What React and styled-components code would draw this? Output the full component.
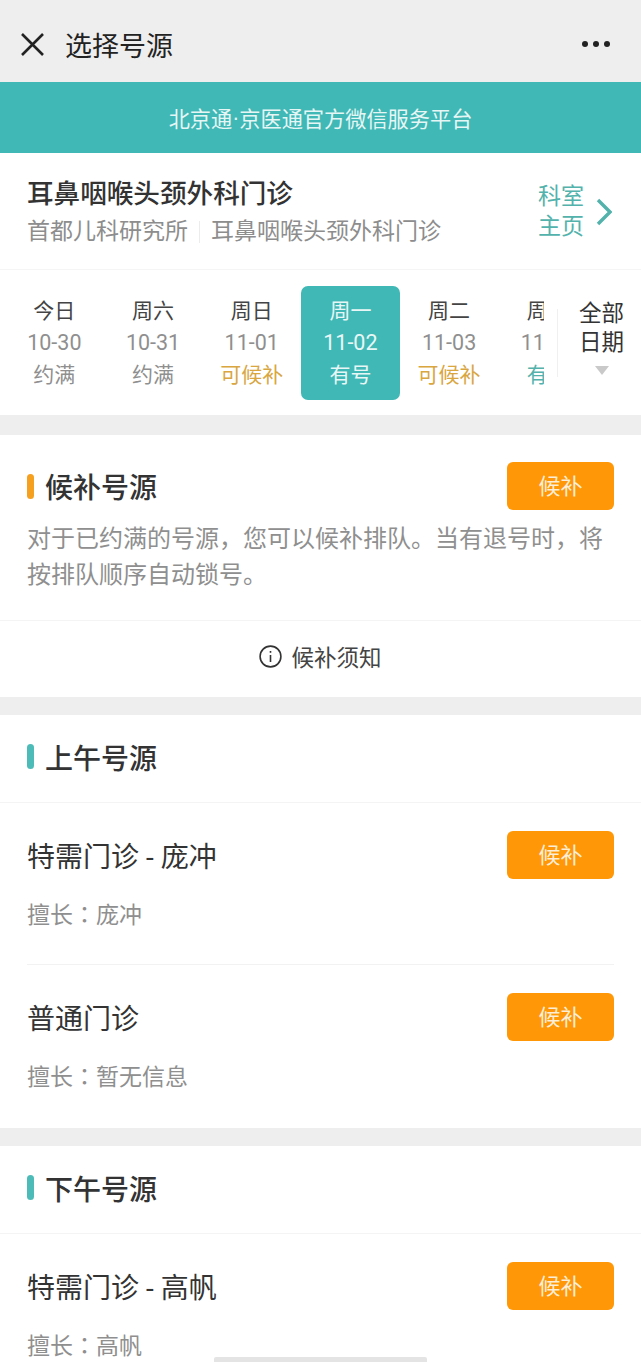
import styled, { createGlobalStyle } from 'styled-components';

const GlobalStyle = createGlobalStyle`
    html, body {
        margin: 0;
        padding: 0;
        background: #eeeeee;
    }
    * {
        box-sizing: border-box;
    }
`;

const Page = styled.div`
    position: relative;
    width: 641px;
    height: 1362px;
    overflow: hidden;
    background: #eeeeee;
    font-family: Roboto, "Noto Sans CJK SC", sans-serif;
    color: #333;
`;

const NavBar = styled.header`
    display: flex;
    align-items: center;
    height: 82px;
    padding: 6px 30px 0 20px;
    background: #eeeeee;
    h1 {
        flex: 1;
        margin: 0 0 0 20px;
        font-size: 27px;
        font-weight: 400;
        color: #222;
    }
`;

const Banner = styled.div`
    display: flex;
    align-items: center;
    justify-content: center;
    height: 71px;
    background: #40b8b5;
    color: #e6f6f5;
    font-size: 21.2px;
`;

const Dot = styled.span`
    font-family: "Liberation Sans", sans-serif;
`;

const DeptHeader = styled.section`
    display: flex;
    align-items: center;
    justify-content: space-between;
    height: 117px;
    padding: 2px 29px 0 27px;
    background: #fff;
    border-bottom: 1px solid #f5f5f5;
`;

const DeptTitle = styled.h2`
    margin: 0;
    font-size: 26.6px;
    line-height: 38px;
    font-weight: 500;
    color: #333;
`;

const DeptSub = styled.div`
    display: flex;
    align-items: center;
    margin-top: 2px;
    font-size: 23px;
    line-height: 34px;
    color: #8d8d8d;
    i {
        width: 1px;
        height: 22px;
        margin: 0 11px;
        background: #ececec;
    }
`;

const HomeLink = styled.div`
    display: flex;
    align-items: center;
    gap: 12px;
    color: #53b3ac;
    font-size: 23px;
    line-height: 30px;
    width: 74px;
    span {
        width: 46px;
        flex-shrink: 0;
    }
    svg {
        flex-shrink: 0;
    }
`;

const DateBar = styled.section`
    display: flex;
    align-items: center;
    height: 145px;
    padding-left: 5px;
    background: #fff;
`;

const DateScroll = styled.div`
    display: flex;
    width: 539px;
    overflow: hidden;
`;

const DateCell = styled.div`
    flex: 0 0 98.7px;
    height: 114px;
    padding-top: 9px;
    display: flex;
    flex-direction: column;
    align-items: center;
    border-radius: 7px;
    background: ${(p) => (p.$active ? '#40b8b5' : 'transparent')};
    color: ${(p) => (p.$active ? '#e8f7f6' : '#444')};
    font-size: 21px;
    line-height: 32px;
`;

const DateDay = styled.div`
    font-size: 21.5px;
    color: ${(p) => (p.$active ? '#e8f7f6' : '#8f8f8f')};
`;

const DateState = styled.div`
    color: ${(p) => p.$color};
`;

const AllDates = styled.div`
    display: flex;
    flex-direction: column;
    align-items: center;
    flex-shrink: 0;
    margin-left: 13px;
    padding-left: 21px;
    height: 68px;
    border-left: 1px solid #f0f0f0;
    font-size: 22.5px;
    line-height: 29px;
    color: #333;
    div {
        margin-top: -10px;
        width: 45px;
    }
    svg {
        flex-shrink: 0;
        margin-top: 9px;
    }
`;

const Card = styled.section`
    margin-top: ${(p) => p.$gap}px;
    background: #fff;
`;

const SectionHead = styled.div`
    display: flex;
    align-items: center;
    justify-content: space-between;
    height: ${(p) => p.$height}px;
    padding: 0 27px;
    ${(p) => (p.$line ? 'padding-bottom: 4px; border-bottom: 1px solid #f4f4f4;' : 'padding-top: 15px;')}
`;

const SectionTitle = styled.h3`
    display: flex;
    align-items: center;
    gap: 11px;
    margin: 0;
    font-size: 28px;
    font-weight: 500;
    color: #333;
    &::before {
        content: '';
        width: 7px;
        height: 25px;
        border-radius: 4px;
        background: ${(p) => p.$color};
    }
`;

const ActionButton = styled.button`
    width: 107px;
    height: 48px;
    border: 0;
    padding: 0 0 4px;
    border-radius: 6px;
    background: #ff9706;
    color: #fdeed8;
    font: inherit;
    font-size: 22px;
    flex-shrink: 0;
`;

const Notice = styled.p`
    margin: 0;
    padding: 0 27px 27px;
    font-size: 24px;
    line-height: 35.5px;
    color: #8f8f8f;
`;

const NoticeLink = styled.div`
    display: flex;
    align-items: center;
    justify-content: center;
    gap: 9px;
    height: 77px;
    padding-bottom: 6px;
    border-top: 1px solid #f4f4f4;
    font-size: 22.5px;
    color: #444;
`;

const Doctor = styled.div`
    margin: 0 27px;
    height: ${(p) => p.$height}px;
    padding-top: 28px;
    ${(p) => (p.$line ? 'border-bottom: 1px solid #f2f2f2;' : '')}
`;

const DoctorRow = styled.div`
    display: flex;
    align-items: center;
    justify-content: space-between;
    font-size: 28px;
    color: #333;
`;

const DoctorSkill = styled.div`
    margin-top: 17px;
    font-size: 23px;
    line-height: 34px;
    color: #8f8f8f;
`;

const Colon = styled.span`
    font-family: "Noto Sans CJK TC", sans-serif;
`;

const HomeBar = styled.div`
    position: absolute;
    left: 214px;
    bottom: 0;
    width: 213px;
    height: 5px;
    border-radius: 2px 2px 0 0;
    background: #e4e4e4;
`;

const days = [
    { week: '今日', day: '10-30', state: '约满', color: '#8f8f8f' },
    { week: '周六', day: '10-31', state: '约满', color: '#8f8f8f' },
    { week: '周日', day: '11-01', state: '可候补', color: '#d9a63f' },
    { week: '周一', day: '11-02', state: '有号', color: '#e8f7f6', active: true },
    { week: '周二', day: '11-03', state: '可候补', color: '#d9a63f' },
    { week: '周三', day: '11-04', state: '有号', color: '#53b3ac' },
];

const morning = [
    { name: '特需门诊 - 庞冲', skill: '庞冲', height: 162, line: true },
    { name: '普通门诊', skill: '暂无信息', height: 163 },
];

const CloseIcon = () => (
    <svg width="25" height="25" viewBox="0 0 25 25" fill="none" stroke="#222" strokeWidth="2.6">
        <path d="M2 2 L23 23 M23 2 L2 23" />
    </svg>
);

const MoreIcon = () => (
    <svg width="30" height="8" viewBox="0 0 30 8" fill="#222">
        <circle cx="4" cy="4" r="3" />
        <circle cx="15" cy="4" r="3" />
        <circle cx="26" cy="4" r="3" />
    </svg>
);

const ChevronIcon = () => (
    <svg width="16" height="28" viewBox="0 0 16 28" fill="none" stroke="#53b3ac" strokeWidth="3.4">
        <path d="M2 2 L14 14 L2 26" />
    </svg>
);

const InfoIcon = () => (
    <svg width="23" height="23" viewBox="0 0 23 23" fill="none" stroke="#333" strokeWidth="1.6">
        <circle cx="11.5" cy="11.5" r="10.4" />
        <path d="M11.5 10 V17" />
        <path d="M11.5 6 V7.8" />
    </svg>
);

const Caret = () => (
    <svg width="14" height="9" viewBox="0 0 14 9" fill="#c9c9c9">
        <path d="M0 0 H14 L7 9 Z" />
    </svg>
);

const Skill = ({ children }) => (
    <DoctorSkill>
        擅长<Colon>：</Colon>
        {children}
    </DoctorSkill>
);

export default function App() {
    return (
        <Page>
            <GlobalStyle />
            <NavBar>
                <CloseIcon />
                <h1>选择号源</h1>
                <MoreIcon />
            </NavBar>
            <Banner>
                北京通<Dot>·</Dot>京医通官方微信服务平台
            </Banner>
            <DeptHeader>
                <div>
                    <DeptTitle>耳鼻咽喉头颈外科门诊</DeptTitle>
                    <DeptSub>
                        首都儿科研究所
                        <i />
                        耳鼻咽喉头颈外科门诊
                    </DeptSub>
                </div>
                <HomeLink>
                    <span>科室主页</span>
                    <ChevronIcon />
                </HomeLink>
            </DeptHeader>
            <DateBar>
                <DateScroll>
                    {days.map((d) => (
                        <DateCell key={d.day} $active={d.active}>
                            <div>{d.week}</div>
                            <DateDay $active={d.active}>{d.day}</DateDay>
                            <DateState $color={d.color}>{d.state}</DateState>
                        </DateCell>
                    ))}
                </DateScroll>
                <AllDates>
                    <div>全部日期</div>
                    <Caret />
                </AllDates>
            </DateBar>
            <Card $gap={20}>
                <SectionHead $height={87}>
                    <SectionTitle $color="#f6a020">候补号源</SectionTitle>
                    <ActionButton>候补</ActionButton>
                </SectionHead>
                <Notice>对于已约满的号源，您可以候补排队。当有退号时，将按排队顺序自动锁号。</Notice>
                <NoticeLink>
                    <InfoIcon />
                    候补须知
                </NoticeLink>
            </Card>
            <Card $gap={18}>
                <SectionHead $height={88} $line>
                    <SectionTitle $color="#4dbcb9">上午号源</SectionTitle>
                </SectionHead>
                {morning.map((m) => (
                    <Doctor key={m.name} $height={m.height} $line={m.line}>
                        <DoctorRow>
                            {m.name}
                            <ActionButton>候补</ActionButton>
                        </DoctorRow>
                        <Skill>{m.skill}</Skill>
                    </Doctor>
                ))}
            </Card>
            <Card $gap={18}>
                <SectionHead $height={88} $line>
                    <SectionTitle $color="#4dbcb9">下午号源</SectionTitle>
                </SectionHead>
                <Doctor $height={162}>
                    <DoctorRow>
                        特需门诊 - 高帆
                        <ActionButton>候补</ActionButton>
                    </DoctorRow>
                    <Skill>高帆</Skill>
                </Doctor>
            </Card>
            <HomeBar />
        </Page>
    );
}
